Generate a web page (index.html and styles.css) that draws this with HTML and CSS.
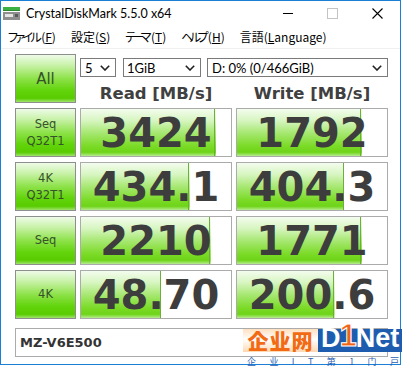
FILE: index.html
```html
<!DOCTYPE html>
<html lang="ja">
<head>
<meta charset="utf-8">
<title>CrystalDiskMark 5.5.0 x64</title>
<link rel="stylesheet" href="styles.css">
</head>
<body>
<div class="window">
  <div class="titlebar">
    <svg class="app-icon" width="17" height="13" viewBox="0 0 17 13">
      <rect x="0" y="0" width="17" height="4" fill="#3cb043"/>
      <rect x="0" y="3" width="17" height="1" fill="#2a8a30"/>
      <rect x="0" y="5" width="17" height="8" fill="#8e8e8e"/>
      <rect x="2" y="7" width="8" height="3" fill="#e4e4e4"/>
      <rect x="12" y="7" width="3" height="3" fill="#5a5a5a"/>
    </svg>
    <span class="title">CrystalDiskMark 5.5.0 x64</span>
    <div class="controls">
      <span class="ctl"><svg width="10" height="10" viewBox="0 0 10 10"><line x1="0" y1="5.5" x2="10" y2="5.5" stroke="#000" stroke-width="1"/></svg></span>
      <span class="ctl"><svg width="11" height="11" viewBox="0 0 11 11"><rect x="0.5" y="0.5" width="10" height="10" fill="none" stroke="#c4c4c4" stroke-width="1"/></svg></span>
      <span class="ctl"><svg width="11" height="11" viewBox="0 0 11 11"><path d="M0.5 0.5 L10.5 10.5 M10.5 0.5 L0.5 10.5" stroke="#000" stroke-width="1.1" fill="none"/></svg></span>
    </div>
  </div>
  <div class="menubar">
    <span class="menu"><span class="kana">ファイル</span>(<u>F</u>)</span>
    <span class="menu">設定(<u>S</u>)</span>
    <span class="menu"><span class="kana kana-tight">テーマ</span>(<u>T</u>)</span>
    <span class="menu"><span class="kana kana-tight">ヘルプ</span>(<u>H</u>)</span>
    <span class="menu">言語(<u>L</u>anguage)</span>
  </div>
  <div class="content">
    <div class="grid">
      <div class="btn btn-all">All</div>
      <div class="top-area">
        <div class="selects">
          <div class="sel sel-count"><span>5</span><svg class="chev" width="10" height="6" viewBox="0 0 10 6"><path d="M0.8 0.8 L5 5 L9.2 0.8" fill="none" stroke="#222" stroke-width="1.6"/></svg></div>
          <div class="sel sel-size"><span>1GiB</span><svg class="chev" width="10" height="6" viewBox="0 0 10 6"><path d="M0.8 0.8 L5 5 L9.2 0.8" fill="none" stroke="#222" stroke-width="1.6"/></svg></div>
          <div class="sel sel-drive"><span>D: 0% (0/466GiB)</span><svg class="chev" width="10" height="6" viewBox="0 0 10 6"><path d="M0.8 0.8 L5 5 L9.2 0.8" fill="none" stroke="#222" stroke-width="1.6"/></svg></div>
        </div>
        <div class="headers">
          <div class="hdr">Read [MB/s]</div>
          <div class="hdr">Write [MB/s]</div>
        </div>
      </div>

      <div class="btn btn-label"><span>Seq</span><span>Q32T1</span></div>
      <div class="result" style="--fill:90%"><span class="val">3424</span></div>
      <div class="result" style="--fill:83.5%"><span class="val">1792</span></div>

      <div class="btn btn-label"><span>4K</span><span>Q32T1</span></div>
      <div class="result" style="--fill:72.5%"><span class="val">434.1</span></div>
      <div class="result" style="--fill:71.5%"><span class="val">404.3</span></div>

      <div class="btn btn-label"><span>Seq</span></div>
      <div class="result" style="--fill:86.5%"><span class="val">2210</span></div>
      <div class="result" style="--fill:83.5%"><span class="val">1771</span></div>

      <div class="btn btn-label"><span>4K</span></div>
      <div class="result" style="--fill:53.5%"><span class="val">48.70</span></div>
      <div class="result" style="--fill:65%"><span class="val">200.6</span></div>
    </div>
    <div class="model">MZ-V6E500</div>
  </div>

  <div class="watermark">
    <div class="wm-logo">
      <span class="wm-cn"><span>企业网</span></span>
      <span class="wm-net"><span class="wm-d">D</span><span class="wm-1">1</span><span class="wm-n">Net</span></span>
    </div>
    <div class="wm-sub"><span>企</span><span>业</span><span>I</span><span>T</span><span>第</span><span>1</span><span>门</span><span>户</span></div>
  </div>
</div>
</body>
</html>
```

FILE: styles.css
```css
* { box-sizing: border-box; }
html, body {
  margin: 0;
  padding: 0;
  background: #ffffff;
}
body {
  width: 402px;
  height: 367px;
  overflow: hidden;
  font-family: "Lato", "Noto Sans", "Noto Sans CJK JP", sans-serif;
  color: #000;
}
.window {
  position: relative;
  width: 401px;
  height: 365px;
  border: 1px solid #1b7fd6;
  background: #ffffff;
}

/* title bar */
.titlebar {
  height: 24px;
  display: flex;
  align-items: center;
}
.app-icon {
  margin-left: 2px;
  flex: none;
}
.title {
  margin-left: 6px;
  font-family: "Lato", "Noto Sans", sans-serif;
  font-size: 12.5px;
  color: #000;
}
.controls {
  margin-left: auto;
  display: flex;
  height: 24px;
}
.ctl {
  width: 45px;
  height: 24px;
  display: flex;
  align-items: center;
  justify-content: center;
}
.ctl svg { display: block; }

/* menu bar */
.menubar {
  height: 24px;
  display: flex;
  align-items: center;
  gap: 15px;
  padding-left: 7px;
  border-bottom: 1px solid #f0f0f0;
  font-family: "Noto Sans CJK JP", sans-serif;
  font-feature-settings: "palt";
  font-size: 12px;
  color: #000;
}
.menu { white-space: nowrap; }
.menu .kana { letter-spacing: -2.6px; margin-right: 2px; }
.menu .kana-tight { letter-spacing: -3.6px; margin-right: 3px; }
.menu u { text-underline-offset: 1px; }

/* content */
.content {
  padding: 5px 0 0 14px;
}
.grid {
  display: grid;
  grid-template-columns: 61px 152px 152px;
  grid-template-rows: 49px repeat(4, 49px);
  column-gap: 4px;
  row-gap: 5px;
}
.btn {
  border: 1px solid #8e8e8e;
  background: linear-gradient(to bottom,
    #eefbe8 0%,
    #c8f2a8 22%,
    #8ee24a 50%,
    #62d40c 75%,
    #58cc00 92%,
    #9ee36a 100%);
  display: flex;
  flex-direction: column;
  align-items: center;
  justify-content: center;
  font-family: "DejaVu Sans", sans-serif;
  color: #35522a;
}
.btn-all {
  font-size: 15px;
}
.btn-label {
  font-size: 11.5px;
  line-height: 16.5px;
}

.top-area {
  grid-column: 2 / 4;
  display: flex;
  flex-direction: column;
}
.selects {
  margin-top: 4px;
  display: flex;
  height: 19px;
}
.sel {
  height: 19px;
  border: 1px solid #7a7a7a;
  background: #fff;
  display: flex;
  align-items: center;
  padding: 0 5px 0 4px;
  font-family: "Lato", "Noto Sans", sans-serif;
  font-size: 13px;
  color: #000;
}
.sel span { flex: 1; white-space: nowrap; }
.chev { flex: none; display: block; }
.sel-count { width: 36px; margin-right: 7px; }
.sel-size { width: 78px; margin-right: 6px; padding-left: 3px; }
.sel-drive { width: 181px; }

.headers {
  margin-top: 9px;
  display: grid;
  grid-template-columns: 152px 152px;
  column-gap: 4px;
}
.hdr {
  text-align: center;
  font-family: "DejaVu Sans", sans-serif;
  font-weight: bold;
  font-size: 16.5px;
  line-height: 16.5px;
  color: #404040;
  white-space: nowrap;
}

.result {
  --fill: 50%;
  border: 1px solid #ababab;
  background-color: #ffffff;
  background-image:
    linear-gradient(#6fae3e, #6fae3e),
    linear-gradient(to bottom,
      #f3fcee 0%,
      #d6f5bf 25%,
      #a8e874 50%,
      #7cdb28 78%,
      #6ed418 92%,
      #b6ec90 100%);
  background-repeat: no-repeat;
  background-position: calc(var(--fill) - 1px) 0, 0 0;
  background-size: 1px 100%, var(--fill) 100%;
  display: flex;
  align-items: center;
  justify-content: center;
}
.val {
  font-family: "DejaVu Sans", sans-serif;
  font-weight: bold;
  font-size: 40px;
  line-height: 40px;
  color: #3d3d3d;
  white-space: nowrap;
}

.model {
  margin-top: 9px;
  width: 373px;
  height: 29px;
  border: 1px solid #ababab;
  background: #fff;
  display: flex;
  align-items: center;
  padding-left: 4px;
  font-family: "DejaVu Sans", sans-serif;
  font-weight: bold;
  font-size: 13px;
  color: #333;
}

/* watermark overlay */
.watermark {
  position: absolute;
  left: 242px;
  top: 318px;
  width: 160px;
  pointer-events: none;
}
.wm-logo {
  display: flex;
  align-items: flex-end;
  height: 33px;
}
.wm-cn {
  width: 75px;
  height: 23px;
  display: flex;
  align-items: flex-end;
  justify-content: center;
  font-family: "Noto Sans CJK SC", sans-serif;
  font-weight: 900;
  font-size: 21px;
  letter-spacing: 1px;
  color: #f26a14;
  background: linear-gradient(to bottom, #ffe0c0 0%, #ffffff 45%, #ffd8b0 100%);
}
.wm-cn > span {
  line-height: normal;
  margin-bottom: -2.5px;
}
.wm-net {
  width: 85px;
  height: 23px;
  background: #1d5cae;
  display: flex;
  align-items: flex-end;
  font-family: "Liberation Sans", sans-serif;
  font-weight: bold;
  font-size: 27px;
  color: #ffffff;
  padding-left: 3px;
}
.wm-net > span {
  line-height: normal;
  margin-bottom: -2px;
}
.wm-d { color: #ffffff; }
.wm-1 {
  color: #f06418;
  font-size: 31px;
  margin-left: -1px;
  margin-right: -1px;
  -webkit-text-stroke: 1px #ffffff;
}
.wm-n { color: #ffffff; }
.wm-sub {
  margin-top: 2.5px;
  display: flex;
  justify-content: space-between;
  padding: 0 4px 0 4px;
  font-family: "Noto Sans CJK SC", sans-serif;
  font-size: 9px;
  line-height: 13px;
  color: #2860b4;
}
```
